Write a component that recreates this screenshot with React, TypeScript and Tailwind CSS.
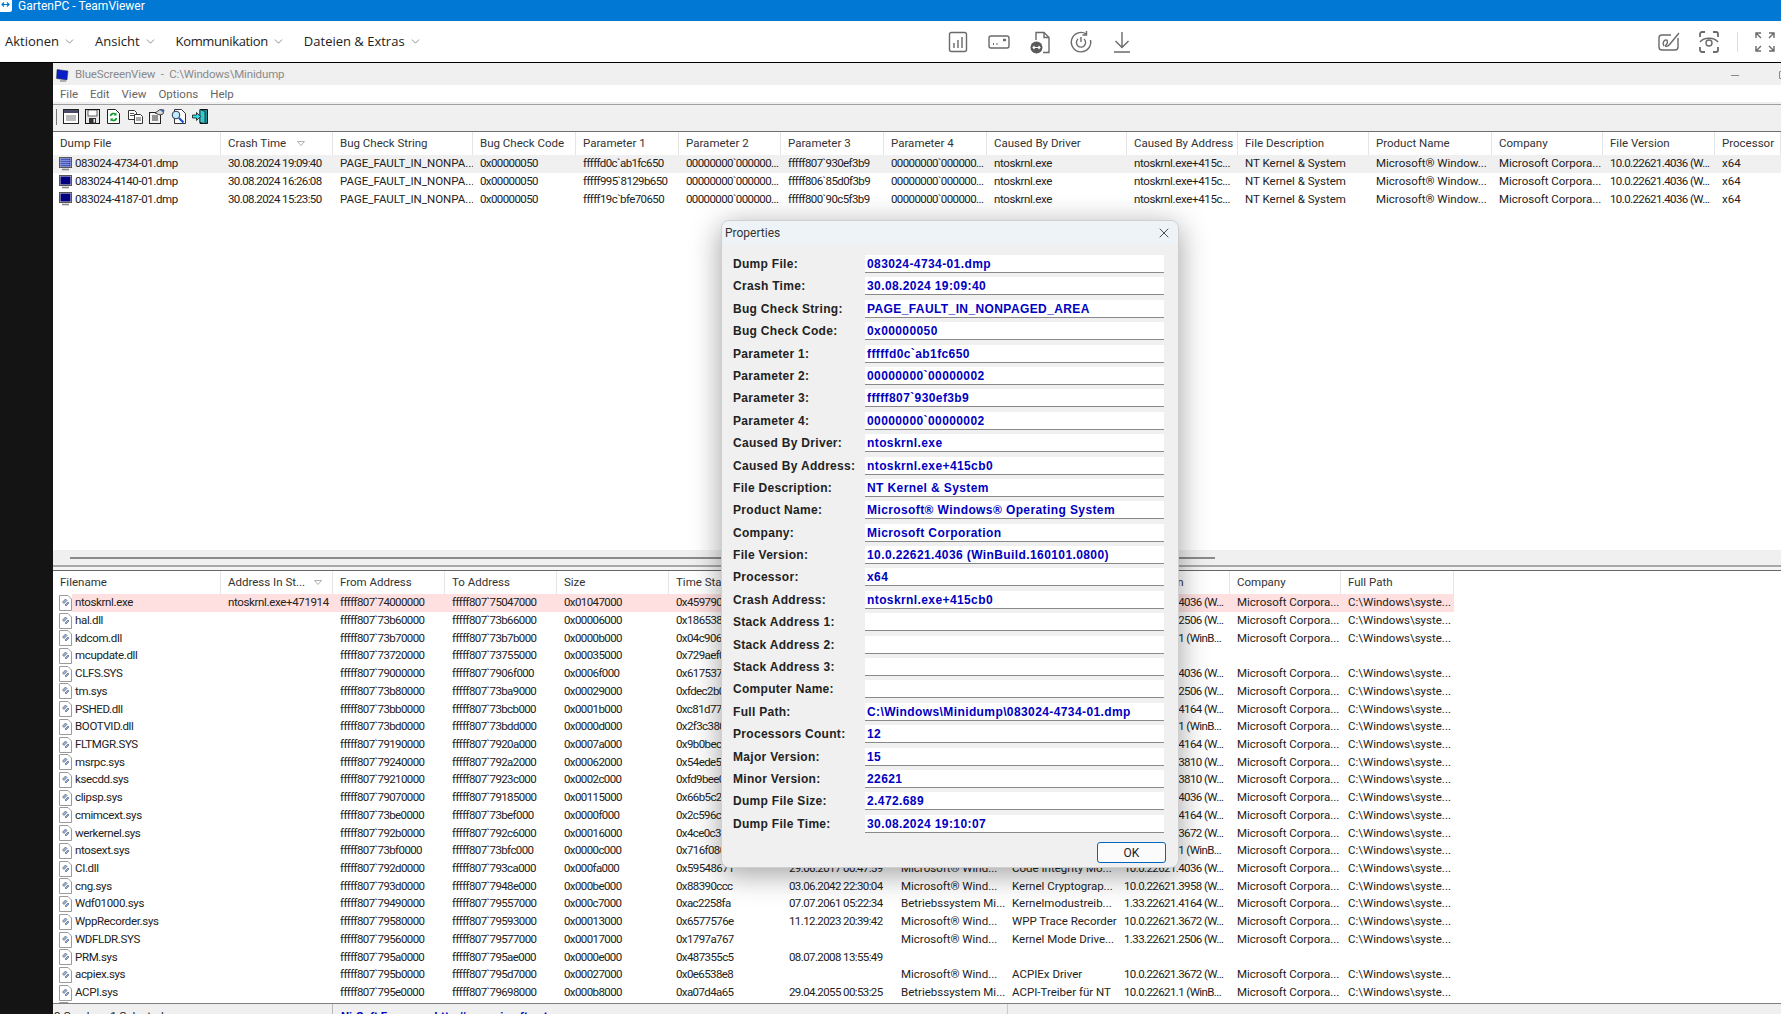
import type { ReactElement, ReactNode } from 'react';
import { ChevronDown, X } from 'lucide-react';

const dumpCols = 'grid-cols-[168px_112px_140px_103px_103px_102px_103px_103px_140px_111px_131px_123px_111px_112px_66px]';
const moduleCols = 'grid-cols-[168px_112px_112px_112px_112px_113px_112px_111px_112px_113px_111px_113px]';

// roboto digits run wider than the original font, so number cells get squeezed
const tight = 'tracking-[-0.6px]';
const name = 'tracking-[-0.35px]';

const dumpHeaders = ['Dump File', 'Crash Time', 'Bug Check String', 'Bug Check Code', 'Parameter 1', 'Parameter 2', 'Parameter 3', 'Parameter 4', 'Caused By Driver', 'Caused By Address', 'File Description', 'Product Name', 'Company', 'File Version', 'Processor'];

const dumpRows = [
  ['083024-4734-01.dmp', '30.08.2024 19:09:40', 'fffffd0c`ab1fc650', 'fffff807`930ef3b9'],
  ['083024-4140-01.dmp', '30.08.2024 16:26:08', 'fffff995`8129b650', 'fffff806`85d0f3b9'],
  ['083024-4187-01.dmp', '30.08.2024 15:23:50', 'fffff19c`bfe70650', 'fffff800`90c5f3b9'],
];

const moduleHeaders = ['Filename', 'Address In St...', 'From Address', 'To Address', 'Size', 'Time Stamp', 'Time String', 'Product Name', 'File Description', 'File Version', 'Company', 'Full Path'];

// name, from, to, size, stamp, time string, product, description, version
const moduleRows: string[][] = [
  ['ntoskrnl.exe', '74000000', '75047000', '0x01047000', '0x45979000', '', '', '', '10.0.22621.4036 (W...'],
  ['hal.dll', '73b60000', '73b66000', '0x00006000', '0x18653800', '', '', '', '10.0.22621.2506 (W...'],
  ['kdcom.dll', '73b70000', '73b7b000', '0x0000b000', '0x04c90600', '', '', '', '10.0.22621.1 (WinB...'],
  ['mcupdate.dll', '73720000', '73755000', '0x00035000', '0x729aef00', '', '', '', ''],
  ['CLFS.SYS', '79000000', '7906f000', '0x0006f000', '0x61753700', '', '', '', '10.0.22621.4036 (W...'],
  ['tm.sys', '73b80000', '73ba9000', '0x00029000', '0xfdec2b00', '', '', '', '10.0.22621.2506 (W...'],
  ['PSHED.dll', '73bb0000', '73bcb000', '0x0001b000', '0xc81d7700', '', '', '', '10.0.22621.4164 (W...'],
  ['BOOTVID.dll', '73bd0000', '73bdd000', '0x0000d000', '0x2f3c3800', '', '', '', '10.0.22621.1 (WinB...'],
  ['FLTMGR.SYS', '79190000', '7920a000', '0x0007a000', '0x9b0bec00', '', '', '', '10.0.22621.4164 (W...'],
  ['msrpc.sys', '79240000', '792a2000', '0x00062000', '0x54ede500', '', '', '', '10.0.22621.3810 (W...'],
  ['ksecdd.sys', '79210000', '7923c000', '0x0002c000', '0xfd9bee00', '', '', '', '10.0.22621.3810 (W...'],
  ['clipsp.sys', '79070000', '79185000', '0x00115000', '0x66b5c200', '', '', '', '10.0.22621.4036 (W...'],
  ['cmimcext.sys', '73be0000', '73bef000', '0x0000f000', '0x2c596c00', '', '', '', '10.0.22621.4164 (W...'],
  ['werkernel.sys', '792b0000', '792c6000', '0x00016000', '0x4ce0c300', '', '', '', '10.0.22621.3672 (W...'],
  ['ntosext.sys', '73bf0000', '73bfc000', '0x0000c000', '0x716f0800', '', '', '', '10.0.22621.1 (WinB...'],
  ['CI.dll', '792d0000', '793ca000', '0x000fa000', '0x59548671', '29.06.2017 00:47:59', 'Microsoft® Wind...', 'Code Integrity Mo...', '10.0.22621.4036 (W...'],
  ['cng.sys', '793d0000', '7948e000', '0x000be000', '0x88390ccc', '03.06.2042 22:30:04', 'Microsoft® Wind...', 'Kernel Cryptograp...', '10.0.22621.3958 (W...'],
  ['Wdf01000.sys', '79490000', '79557000', '0x000c7000', '0xac2258fa', '07.07.2061 05:22:34', 'Betriebssystem Mi...', 'Kernelmodustreib...', '1.33.22621.4164 (W...'],
  ['WppRecorder.sys', '79580000', '79593000', '0x00013000', '0x6577576e', '11.12.2023 20:39:42', 'Microsoft® Wind...', 'WPP Trace Recorder', '10.0.22621.3672 (W...'],
  ['WDFLDR.SYS', '79560000', '79577000', '0x00017000', '0x1797a767', '', 'Microsoft® Wind...', 'Kernel Mode Drive...', '1.33.22621.2506 (W...'],
  ['PRM.sys', '795a0000', '795ae000', '0x0000e000', '0x487355c5', '08.07.2008 13:55:49', '', '', ''],
  ['acpiex.sys', '795b0000', '795d7000', '0x00027000', '0x0e6538e8', '', 'Microsoft® Wind...', 'ACPIEx Driver', '10.0.22621.3672 (W...'],
  ['ACPI.sys', '795e0000', '79698000', '0x000b8000', '0xa07d4a65', '29.04.2055 00:53:25', 'Betriebssystem Mi...', 'ACPI-Treiber für NT', '10.0.22621.1 (WinB...'],
];

const properties: [string, string][] = [
  ['Dump File:', '083024-4734-01.dmp'],
  ['Crash Time:', '30.08.2024 19:09:40'],
  ['Bug Check String:', 'PAGE_FAULT_IN_NONPAGED_AREA'],
  ['Bug Check Code:', '0x00000050'],
  ['Parameter 1:', 'fffffd0c`ab1fc650'],
  ['Parameter 2:', '00000000`00000002'],
  ['Parameter 3:', 'fffff807`930ef3b9'],
  ['Parameter 4:', '00000000`00000002'],
  ['Caused By Driver:', 'ntoskrnl.exe'],
  ['Caused By Address:', 'ntoskrnl.exe+415cb0'],
  ['File Description:', 'NT Kernel & System'],
  ['Product Name:', 'Microsoft® Windows® Operating System'],
  ['Company:', 'Microsoft Corporation'],
  ['File Version:', '10.0.22621.4036 (WinBuild.160101.0800)'],
  ['Processor:', 'x64'],
  ['Crash Address:', 'ntoskrnl.exe+415cb0'],
  ['Stack Address 1:', ''],
  ['Stack Address 2:', ''],
  ['Stack Address 3:', ''],
  ['Computer Name:', ''],
  ['Full Path:', 'C:\\Windows\\Minidump\\083024-4734-01.dmp'],
  ['Processors Count:', '12'],
  ['Major Version:', '15'],
  ['Minor Version:', '22621'],
  ['Dump File Size:', '2.472.689'],
  ['Dump File Time:', '30.08.2024 19:10:07'],
];

function DumpIcon({ selected }: { selected?: boolean }) {
  return (
    <svg width="13" height="14" viewBox="0 0 13 14" className="shrink-0">
      <rect x="0.5" y="0.5" width="12" height="10" fill="#d8d8d8" stroke="#555" />
      <rect x="1.5" y="1.5" width="10" height="8" fill={selected ? '#2030b0' : '#000080'} />
      {selected && <path d="M3 1.5v8M5 1.5v8M7 1.5v8M9 1.5v8M1.5 3.5h10M1.5 5.5h10M1.5 7.5h10" stroke="#a8b4e8" strokeWidth="0.6" />}
      <path d="M3 12.5h7" stroke="#888" strokeWidth="1.6" />
    </svg>
  );
}

function FileIcon() {
  return (
    <svg width="13" height="16" viewBox="0 0 13 16" className="shrink-0">
      <path d="M0.5 0.5h8.5l3.5 3.5v11.5h-12z" fill="#fff" stroke="#9a9a9a" />
      <path d="M3.5 7l3-3 1.5 1.5-3 3zM6 10l3-3 1 1-3 3z" fill="#9fb0cc" stroke="#50688e" strokeWidth="0.7" />
    </svg>
  );
}

const toolIcons: ReactElement[] = [
  <svg key="report" width="16" height="15" viewBox="0 0 16 15">
    <rect x="0.5" y="0.5" width="15" height="14" fill="#fff" stroke="#222" />
    <rect x="1" y="1" width="14" height="3" fill="#4a4a6a" />
    <path d="M3 7h10M3 9h10M3 11h10" stroke="#777" />
  </svg>,
  <svg key="save" width="15" height="15" viewBox="0 0 15 15">
    <rect x="0.5" y="0.5" width="14" height="14" fill="#e8e8e8" stroke="#111" />
    <rect x="3" y="1" width="9" height="6" fill="#fff" stroke="#222" strokeWidth="0.7" />
    <rect x="4" y="9" width="7" height="5.5" fill="#333" />
    <rect x="8.5" y="10" width="1.5" height="3.5" fill="#eee" />
  </svg>,
  <svg key="refresh" width="13" height="15" viewBox="0 0 13 15">
    <path d="M0.5 0.5h8l4 4v10h-12z" fill="#fff" stroke="#222" />
    <path d="M3.5 7a3 3 0 0 1 5.2-1.5M9.5 9a3 3 0 0 1-5.2 1.5" fill="none" stroke="#119a2a" strokeWidth="1.6" />
    <path d="M9.5 3.5v3h-3zM3.5 12.5v-3h3z" fill="#119a2a" />
  </svg>,
  <svg key="copy" width="15" height="14" viewBox="0 0 15 14">
    <path d="M0.5 0.5h6l2 2v7h-8z" fill="#fff" stroke="#333" />
    <path d="M6.5 4.5h6l2 2v7h-8z" fill="#fff" stroke="#333" />
    <path d="M2 3.5h4M2 5.5h4M8 8h5M8 10h5" stroke="#555" />
  </svg>,
  <svg key="props" width="16" height="15" viewBox="0 0 16 15">
    <rect x="0.5" y="3.5" width="11" height="11" fill="#f4f4f4" stroke="#222" />
    <path d="M3 7h6M3 9h6M3 11h6" stroke="#333" />
    <path d="M6 4l5-3.5 4 0.5-1 4-3 1z" fill="#d8d8d8" stroke="#222" strokeWidth="0.8" />
    <path d="M11 1h4v3z" fill="#2b62c8" />
  </svg>,
  <svg key="find" width="15" height="15" viewBox="0 0 15 15">
    <path d="M3.5 0.5h7l4 4v10h-11z" fill="#fff" stroke="#333" />
    <circle cx="5" cy="6" r="3.8" fill="#bfeeff" stroke="#335" />
    <path d="M8 9l4.5 4.5" stroke="#1d4fd0" strokeWidth="2.2" />
  </svg>,
  <svg key="exit" width="16" height="15" viewBox="0 0 16 15">
    <path d="M8 0.5h7.5v14h-7.5z" fill="#1e8f95" stroke="#111" />
    <path d="M8 0.5l5 2v12l-5-1z" fill="#35c9d0" stroke="#111" strokeWidth="0.7" />
    <path d="M0.5 6h4v-2.5l4 4-4 4V9h-4z" fill="#2be0ea" stroke="#111" strokeWidth="0.8" />
  </svg>,
];

const tvStroke = { fill: 'none', stroke: '#6a6a6a', strokeWidth: 1.4 };

const tvIcons: ReactElement[] = [
  <svg key="stats" width="24" height="24" viewBox="0 0 24 24" {...tvStroke}>
    <rect x="3.5" y="2.5" width="17" height="19" rx="2" />
    <path d="M8 13v5M12 10v8M16 7v11" />
  </svg>,
  <svg key="card" width="24" height="24" viewBox="0 0 24 24" {...tvStroke}>
    <rect x="2" y="6" width="20" height="12" rx="2" />
    <path d="M6 14h1M9.5 14h1" strokeWidth="2" />
    <path d="M16 10h3" strokeWidth="2.4" />
  </svg>,
  <svg key="file" width="24" height="24" viewBox="0 0 24 24" {...tvStroke}>
    <path d="M8 10V2.5h8l5 5v15h-6" />
    <path d="M16 2.5v5h5" />
    <circle cx="8.5" cy="17.5" r="6" fill="#5a5a5a" stroke="none" />
    <path d="M5.5 17.5h6M6.5 16l-1.5 1.5L6.5 19M10.5 16l1.5 1.5L10.5 19" stroke="#fff" strokeWidth="1.1" />
  </svg>,
  <svg key="power" width="24" height="24" viewBox="0 0 24 24" {...tvStroke}>
    <path d="M17 3.8A9.7 9.7 0 1 0 21.5 10" />
    <path d="M17.5 1v4h-4" />
    <path d="M9 9a4.6 4.6 0 1 0 6 0M12 7v5" />
  </svg>,
  <svg key="download" width="24" height="24" viewBox="0 0 24 24" {...tvStroke}>
    <path d="M12 2v15M5.5 11l6.5 6.5 6.5-6.5M4 22h16" />
  </svg>,
];

function HeaderCell({ label, sortPad }: { label: string; sortPad?: string }) {
  return (
    <div className={`flex h-[23px] items-center justify-between overflow-hidden whitespace-nowrap border-r border-[#e5e5e5] pl-[7px] text-[#333] ${sortPad ?? ''}`}>
      <span>{label}</span>
      {sortPad && (
        <svg width="8" height="5" viewBox="0 0 8 5" className="shrink-0">
          <path d="M0.5 0.5h7l-3.5 4z" fill="none" stroke="#b0b0b0" />
        </svg>
      )}
    </div>
  );
}

function Cell({ value, className }: { value: string; className?: string }) {
  return <div className={`overflow-hidden whitespace-nowrap pl-[7px] ${className ?? ''}`}>{value}</div>;
}

function DumpTable() {
  return (
    <div className="h-[418px] overflow-hidden bg-white">
      <div className={`grid ${dumpCols}`}>
        {dumpHeaders.map((h) => (
          <HeaderCell key={h} label={h} sortPad={h === 'Crash Time' ? 'pr-[27px]' : undefined} />
        ))}
      </div>
      {dumpRows.map((row, i) => (
        <div key={row[0]} className={`grid h-[17.7px] items-center ${dumpCols} ${i === 0 ? 'bg-[#f0f0f0]' : ''}`}>
          <div className="flex items-center gap-[3px] whitespace-nowrap pl-[6px] tracking-[-0.4px]">
            <DumpIcon selected={i === 0} />
            {row[0]}
          </div>
          <Cell value={row[1]} className={tight} />
          <Cell value="PAGE_FAULT_IN_NONPA..." />
          <Cell value="0x00000050" className={tight} />
          <Cell value={row[2]} className={tight} />
          <Cell value="00000000`000000..." className={tight} />
          <Cell value={row[3]} className={tight} />
          <Cell value="00000000`000000..." className={tight} />
          <Cell value="ntoskrnl.exe" className={name} />
          <Cell value="ntoskrnl.exe+415c..." className={name} />
          <Cell value="NT Kernel & System" />
          <Cell value="Microsoft® Window..." />
          <Cell value="Microsoft Corpora..." />
          <Cell value="10.0.22621.4036 (W..." className={tight} />
          <Cell value="x64" />
        </div>
      ))}
    </div>
  );
}

function Band({ pink, className, children }: { pink: boolean; className?: string; children: ReactNode }) {
  return (
    <div className={`flex h-full items-center overflow-hidden whitespace-nowrap pl-[7px] ${pink ? 'bg-[#ffe0e0]' : ''} ${className ?? ''}`}>{children}</div>
  );
}

function ModuleTable() {
  return (
    <div className="min-h-0 flex-1 overflow-hidden bg-white">
      <div className={`grid w-[1401px] ${moduleCols}`}>
        {moduleHeaders.map((h) => (
          <HeaderCell key={h} label={h} sortPad={h === 'Address In St...' ? 'pr-[10px]' : undefined} />
        ))}
      </div>
      {moduleRows.map((row, i) => (
        <div key={row[0]} className={`grid h-[17.73px] w-[1401px] items-center ${moduleCols}`}>
          <div className="flex h-full items-center whitespace-nowrap pl-[6px]">
            <FileIcon />
            <span className={`flex h-full flex-1 items-center pl-[3px] ${name} ${i === 0 ? 'bg-[#ffe0e0]' : ''}`}>{row[0]}</span>
          </div>
          <Band pink={i === 0} className={name}>{i === 0 ? 'ntoskrnl.exe+471914' : ''}</Band>
          <Band pink={i === 0} className={tight}>{`fffff807\`${row[1]}`}</Band>
          <Band pink={i === 0} className={tight}>{`fffff807\`${row[2]}`}</Band>
          <Band pink={i === 0} className={tight}>{row[3]}</Band>
          <Band pink={i === 0} className={tight}>{row[4]}</Band>
          <Band pink={i === 0} className={tight}>{row[5]}</Band>
          <Band pink={i === 0}>{row[6]}</Band>
          <Band pink={i === 0}>{row[7]}</Band>
          <Band pink={i === 0} className={tight}>{row[8]}</Band>
          <Band pink={i === 0}>{row[8] ? 'Microsoft Corpora...' : ''}</Band>
          <Band pink={i === 0}>{row[8] ? 'C:\\Windows\\syste...' : ''}</Band>
        </div>
      ))}
      <div className="h-[17.73px] pl-[6px]">
        <FileIcon />
      </div>
    </div>
  );
}

function PropertiesDialog() {
  return (
    <div className="absolute left-[721px] top-[220px] flex h-[648px] w-[458px] flex-col overflow-hidden rounded-[8px] border border-[#cfcfcf] bg-[#f0f0f0] shadow-[0_6px_30px_rgba(0,0,0,0.38)]">
      <div className="flex h-[23px] shrink-0 items-center justify-between bg-[#eef3f8] pl-[3px] pr-[6px] text-[12px] text-[#333]">
        <span>Properties</span>
        <X size={16} strokeWidth={1.2} className="text-[#222]" />
      </div>
      <div className="flex flex-col pl-[11px] pt-[11px] [font-family:'Liberation_Sans',sans-serif] text-[12px] font-bold">
        {properties.map(([label, value]) => (
          <div key={label} className="flex h-[22.4px] items-start">
            <span className="w-[132px] shrink-0 whitespace-nowrap leading-[18px] tracking-[0.3px] text-[#222]">{label}</span>
            <span className="h-[18px] w-[299px] shrink-0 whitespace-nowrap border-b-[1.5px] border-[#8a8a8a] bg-white pl-[2px] leading-[18px] tracking-[0.4px] text-[#0000c0]">{value}</span>
          </div>
        ))}
      </div>
      <div className="flex justify-end pr-[12px] pt-[5px]">
        <button className="flex h-[21px] w-[69px] items-center justify-center rounded-[3px] border-[1.5px] border-[#0067c0] bg-[#fbfbfb] text-[12px] text-[#222]">OK</button>
      </div>
    </div>
  );
}

export default function App() {
  return (
    <div className="relative flex h-[1014px] w-[1781px] flex-col overflow-hidden bg-[#141414] text-[11.5px] text-[#222] [font-family:Roboto,sans-serif]">
      {/* TeamViewer title */}
      <div className="flex h-[21px] shrink-0 items-start gap-[5px] bg-[#0078d4] text-[12px] leading-[12px] text-white">
        <svg width="13" height="13" viewBox="0 0 13 13" className="shrink-0">
          <rect x="-1" y="-3" width="13" height="15" rx="2.5" fill="#fff" />
          <path d="M2 4.5h7M4 2.5l-2 2 2 2M7 2.5l2 2-2 2" stroke="#0078d4" strokeWidth="1.2" fill="none" />
        </svg>
        <span>GartenPC - TeamViewer</span>
      </div>

      {/* TeamViewer toolbar */}
      <div className="flex h-[41px] shrink-0 items-center bg-white pl-[5px] pr-[5px] text-[13px] text-[#222] [font-family:'Open_Sans',sans-serif]">
        <div className="flex w-[934px] items-center">
          {['Aktionen', 'Ansicht', 'Kommunikation', 'Dateien & Extras'].map((m) => (
            <span key={m} className={`mr-[19px] flex items-center gap-[4px] whitespace-nowrap ${m === 'Kommunikation' ? 'tracking-[-0.35px]' : ''}`}>
              {m}
              <ChevronDown size={13} strokeWidth={1.2} className="text-[#555]" />
            </span>
          ))}
        </div>
        <div className="ml-[7px] flex items-center gap-[17px]">{tvIcons}</div>
        <div className="ml-auto flex items-center gap-[16px]">
          <svg width="24" height="24" viewBox="0 0 24 24" {...tvStroke}>
            <path d="M21 8v9a3 3 0 0 1-3 3H5a3 3 0 0 1-3-3V8a3 3 0 0 1 3-3h9" />
            <path d="M7 16c-2-3 0-6 2-6s2 3 0 5 2 2 4-1l9-11" />
          </svg>
          <svg width="24" height="24" viewBox="0 0 24 24" {...tvStroke}>
            <path d="M3 7V4a2 2 0 0 1 2-2h3M16 2h3a2 2 0 0 1 2 2v3M21 17v3a2 2 0 0 1-2 2h-3M8 22H5a2 2 0 0 1-2-2v-3" strokeWidth="1.8" />
            <path d="M3 12c4-5 14-5 18 0" />
            <circle cx="12" cy="13" r="3" />
          </svg>
          <div className="h-[20px] w-px bg-[#ddd]" />
          <svg width="22" height="22" viewBox="0 0 22 22" {...tvStroke}>
            <path d="M2 7V2h5M2 2l5 5M15 2h5v5M20 2l-5 5M2 15v5h5M2 20l5-5M20 15v5h-5M20 20l-5-5" />
          </svg>
        </div>
      </div>
      <div className="h-[1px] shrink-0 bg-black" />

      <div className="flex min-h-0 flex-1">
        <div className="w-[53px] shrink-0" />
        <div className="flex min-w-0 flex-1 flex-col overflow-hidden">
          {/* BlueScreenView title */}
          <div className="flex h-[22px] shrink-0 items-center bg-[#f0f0f0] pl-[3px] pt-[2px] text-[#8a8a8a]">
            <svg width="13" height="15" viewBox="0 0 13 15" className="mr-[6px] shrink-0">
              <path d="M1 1.5l11 1.5-1 9-10.5-1.5z" fill="#0a1ec8" stroke="#333" strokeWidth="0.5" />
              <path d="M4 13h6" stroke="#999" strokeWidth="1.5" />
            </svg>
            <span className="whitespace-pre tracking-[-0.15px]">BlueScreenView  -  C:\Windows\Minidump</span>
            <div className="ml-auto mr-[40px] h-px w-[8px] bg-[#888]" />
            <div className="mr-[-6px] h-[8px] w-[8px] rounded-[1px] border border-[#888]" />
          </div>

          {/* menu */}
          <div className="flex h-[17px] shrink-0 items-center gap-[12px] bg-white pl-[7px] pt-[2px] text-[#666]">
            <span>File</span>
            <span>Edit</span>
            <span>View</span>
            <span>Options</span>
            <span>Help</span>
          </div>
          <div className="h-[2px] shrink-0 bg-[#f0f0f0]" />
          <div className="h-px shrink-0 bg-[#a0a0a0]" />

          {/* toolbar */}
          <div className="flex h-[26px] shrink-0 items-center bg-[#f0f0f0] pb-[3px] pl-[3px]">
            <div className="mr-[3px] h-[16px] w-px bg-[#777]" />
            <div className="grid grid-cols-[repeat(7,21.5px)] place-items-center">{toolIcons}</div>
          </div>
          <div className="h-px shrink-0 bg-[#707070]" />

          <DumpTable />

          {/* splitter */}
          <div className="flex h-[15px] shrink-0 items-center bg-[#f0f0f0] pl-[17px]">
            <div className="h-[2px] w-[1145px] bg-[#8a8a8a]" />
          </div>
          <div className="h-[2px] shrink-0 bg-[#a8a8a8]" />
          <div className="h-[3px] shrink-0 bg-[#f4f4f4]" />
          <div className="h-px shrink-0 bg-[#666]" />

          <ModuleTable />

          {/* status bar */}
          <div className="h-px shrink-0 bg-[#808080]" />
          <div className="flex h-[10px] shrink-0 overflow-hidden bg-[#f0f0f0] leading-[14px]">
            <div className="w-[280px] shrink-0 border-r border-[#bbb] pl-[1px] pt-[5px]">3 Crashes, 1 Selected</div>
            <div className="w-[675px] shrink-0 border-r border-[#ccc] pl-[8px] pt-[5px] font-bold text-[#0000c0]">NirSoft Freeware.  http://www.nirsoft.net</div>
          </div>
        </div>
      </div>

      <PropertiesDialog />
    </div>
  );
}
